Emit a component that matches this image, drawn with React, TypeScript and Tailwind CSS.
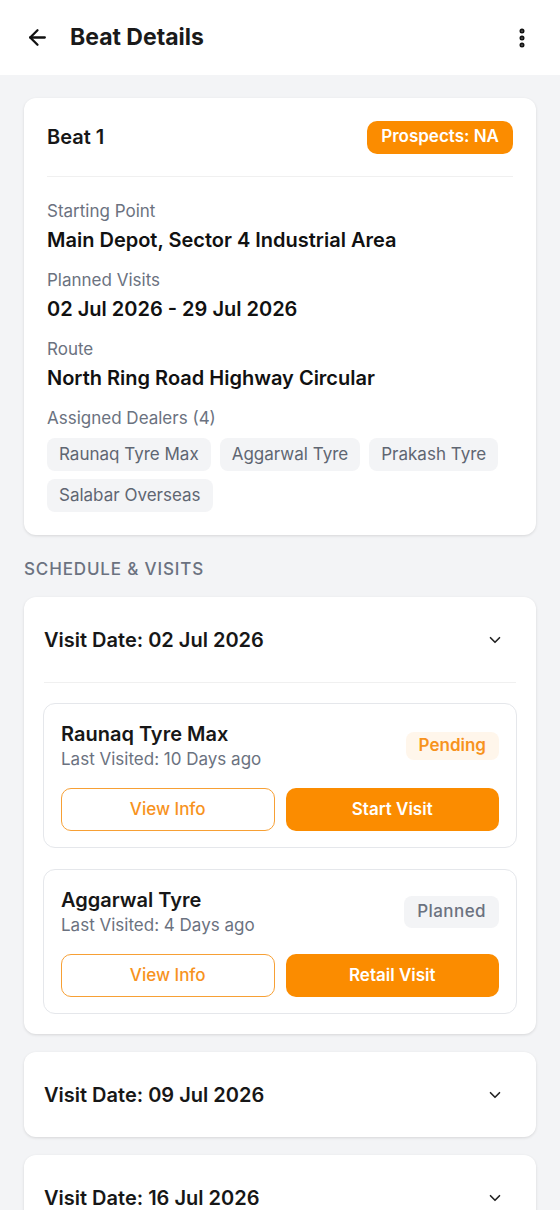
import React from 'react';
import { ArrowLeft, ChevronDown, EllipsisVertical } from 'lucide-react';

const dealers = ['Raunaq Tyre Max', 'Aggarwal Tyre', 'Prakash Tyre', 'Salabar Overseas'];

const visits = [
  { name: 'Raunaq Tyre Max', last: '10 Days ago', status: 'Pending', action: 'Start Visit' },
  { name: 'Aggarwal Tyre', last: '4 Days ago', status: 'Planned', action: 'Retail Visit' },
];

const Field: React.FC<{ label: string; value: string }> = ({ label, value }) => (
  <div className="flex flex-col gap-[3px]">
    <span className="text-[17px] leading-6 text-[#6b7280]">{label}</span>
    <span className="text-[20px] leading-7 font-semibold text-[#111111]">{value}</span>
  </div>
);

const StatusBadge: React.FC<{ status: string }> = ({ status }) =>
  status === 'Pending' ? (
    <span className="h-[28px] px-[13px] flex items-center rounded-lg bg-[#fff6eb] text-[17px] font-semibold text-[#f7931e]">
      {status}
    </span>
  ) : (
    <span className="h-[32px] px-[13px] flex items-center rounded-lg bg-[#f3f4f6] text-[17px] font-medium tracking-wide text-[#6b7280]">
      {status}
    </span>
  );

const VisitHeader: React.FC<{ date: string }> = ({ date }) => (
  <div className="h-[85px] flex items-center justify-between px-5">
    <span className="text-[20px] leading-7 font-semibold text-[#171717]">Visit Date: {date}</span>
    <ChevronDown className="w-[18px] h-[18px] mr-[12px] text-[#222]" strokeWidth={2.2} />
  </div>
);

export default function App() {
  return (
    <div className="min-h-[1210px] bg-[#f3f4f6]" style={{ fontFamily: 'Inter, "Noto Sans", sans-serif' }}>
      {/* Top bar */}
      <header className="h-[75px] bg-white flex items-center justify-between pl-[25px] pr-[26px]">
        <div className="flex items-center gap-[20px]">
          <ArrowLeft className="w-[25px] h-[25px] text-[#111]" strokeWidth={2.2} />
          <h1 className="text-[23px] font-bold text-[#1a1a1a]">Beat Details</h1>
        </div>
        <EllipsisVertical className="w-[24px] h-[24px] text-[#111]" strokeWidth={3} />
      </header>

      <main className="px-6 pt-[23px] pb-6 flex flex-col">
        {/* Beat summary */}
        <section className="bg-white rounded-xl shadow-[0_1px_3px_rgba(0,0,0,0.12)] px-[23px] pt-[22px] pb-[23px]">
          <div className="flex items-center justify-between h-[34px]">
            <span className="text-[20px] font-semibold text-[#171717]">Beat 1</span>
            <span className="h-[33px] px-[14px] flex items-center rounded-[10px] bg-[#fb8c00] text-[17px] font-semibold text-white">
              Prospects: NA
            </span>
          </div>
          <div className="h-px bg-[#f0f0f0] mt-[22px] mb-[22px]" />
          <div className="flex flex-col gap-[14px]">
            <Field label="Starting Point" value="Main Depot, Sector 4 Industrial Area" />
            <Field label="Planned Visits" value="02 Jul 2026 - 29 Jul 2026" />
            <Field label="Route" value="North Ring Road Highway Circular" />
            <div>
              <span className="text-[17px] leading-6 text-[#6b7280]">Assigned Dealers (4)</span>
              <div className="flex flex-wrap gap-x-[9px] gap-y-2 mt-2">
                {dealers.map((d) => (
                  <span
                    key={d}
                    className="h-[33px] px-[12px] flex items-center rounded-lg bg-[#f3f4f6] text-[17px] text-[#5f6672]"
                  >
                    {d}
                  </span>
                ))}
              </div>
            </div>
          </div>
        </section>

        <h2 className="mt-[22px] mb-[16px] text-[17px] leading-6 font-medium tracking-[0.05em] text-[#6b7280] uppercase">
          Schedule &amp; Visits
        </h2>

        <div className="flex flex-col gap-[18px]">
          {/* Expanded visit */}
          <section className="bg-white rounded-xl shadow-[0_1px_3px_rgba(0,0,0,0.12)]">
            <VisitHeader date="02 Jul 2026" />
            <div className="h-px bg-[#f0f0f0] mx-5" />
            <div className="px-[19px] pt-5 pb-5 flex flex-col gap-[21px]">
              {visits.map((v) => (
                <div key={v.name} className="border border-[#e5e7eb] rounded-xl px-[17px] pt-[17px] pb-4">
                  <div className="flex items-center justify-between">
                    <div className="flex flex-col">
                      <span className="text-[20px] leading-[26px] font-semibold text-[#171717]">{v.name}</span>
                      <span className="text-[17px] leading-6 text-[#6b7280]">Last Visited: {v.last}</span>
                    </div>
                    <StatusBadge status={v.status} />
                  </div>
                  <div className="grid grid-cols-2 gap-[11px] mt-[17px]">
                    <button className="h-[43px] rounded-[10px] border-[1.5px] border-[#f7a035] text-[17px] font-medium text-[#f7931e]">
                      View Info
                    </button>
                    <button className="h-[43px] rounded-[10px] bg-[#fb8c00] text-[17px] font-semibold text-white">
                      {v.action}
                    </button>
                  </div>
                </div>
              ))}
            </div>
          </section>

          {['09 Jul 2026', '16 Jul 2026'].map((d) => (
            <section key={d} className="bg-white rounded-xl shadow-[0_1px_3px_rgba(0,0,0,0.12)]">
              <VisitHeader date={d} />
            </section>
          ))}
        </div>
      </main>
    </div>
  );
}
